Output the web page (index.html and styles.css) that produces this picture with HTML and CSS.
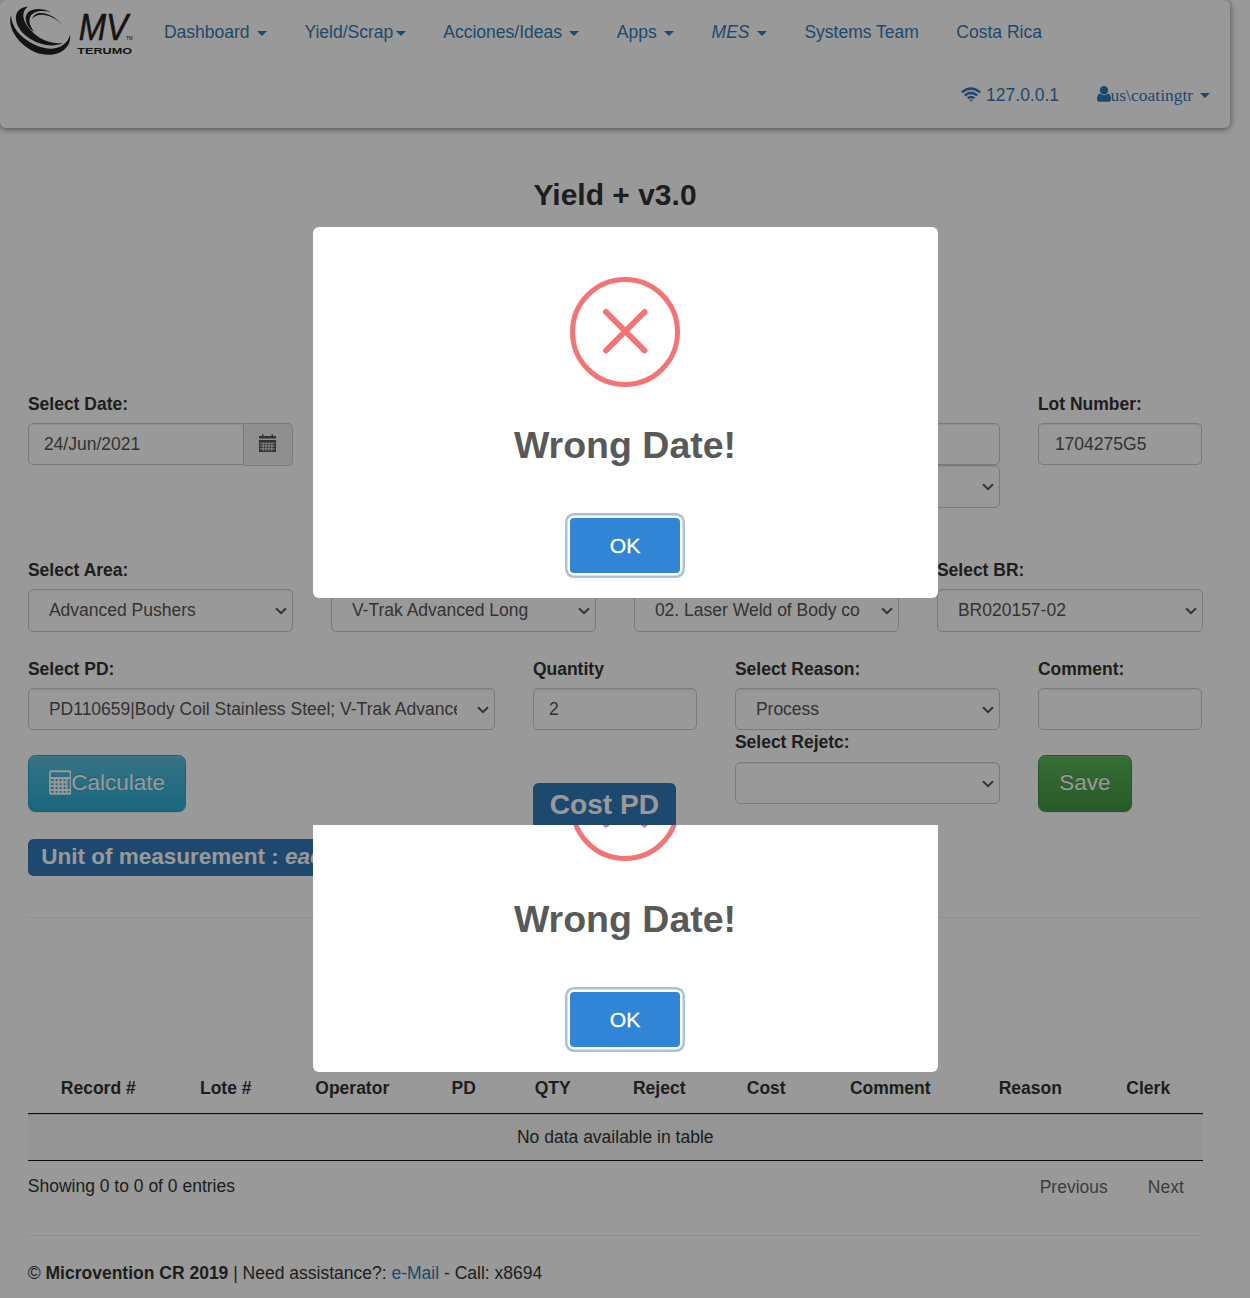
FILE: index.html
```html
<!DOCTYPE html>
<html lang="en">
<head>
<meta charset="utf-8">
<title>Yield + v3.0</title>
<link rel="stylesheet" href="styles.css">
</head>
<body>
<svg class="defs" aria-hidden="true">
  <symbol id="chev" viewBox="0 0 12 8"><path d="M1 1.2 6 6.2 11 1.2" fill="none" stroke="currentColor" stroke-width="2"/></symbol>
</svg>
<div class="page">
  <nav class="navbar">
    <svg class="logo" viewBox="0 0 420 192">
      <g fill="#222">
        <path d="M33 46C22 78 48 130 104 156C158 178 216 154 210 104C202 138 164 154 124 142C76 126 36 92 33 46Z"/>
        <path d="M84 20C36 22 38 72 76 106C108 134 156 144 188 130C156 131 126 122 100 98C68 68 60 36 84 20Z"/>
        <path d="M152 37C120 19 74 26 77 58C80 80 93 90 103 96C90 78 85 64 91 50C98 33 128 29 152 37Z"/>
        <path d="M97 56C104 28 154 34 188 76C158 43 114 34 97 56Z"/>
        <text x="236" y="121" font-size="112" font-style="italic" stroke="#222" stroke-width="1.5" textLength="148" lengthAdjust="spacingAndGlyphs">MV</text>
        <text x="378" y="121" font-size="15" textLength="20" lengthAdjust="spacingAndGlyphs">TM</text>
        <text x="232" y="161" font-size="28" font-weight="bold" textLength="164" lengthAdjust="spacingAndGlyphs">TERUMO</text>
      </g>
    </svg>
    <div class="menus">
      <ul class="menu">
        <li>Dashboard <b class="caret"></b></li>
        <li>Yield/Scrap<b class="caret"></b></li>
        <li>Acciones/Ideas <b class="caret"></b></li>
        <li>Apps <b class="caret"></b></li>
        <li><i>MES</i> <b class="caret"></b></li>
        <li>Systems Team</li>
        <li>Costa Rica</li>
      </ul>
      <ul class="menu right">
        <li><svg class="wifi" viewBox="0 0 20 15"><g fill="none" stroke="currentColor" stroke-width="2.5"><path d="M.8 5.4Q10-2.4 19.2 5.4"/><path d="M3.8 8.5Q10 3.2 16.2 8.5"/><path d="M6.7 11.3Q10 8.6 13.3 11.3"/></g><path d="M8.2 13Q10 11.8 11.8 13L10 14.8Z" fill="currentColor"/></svg> 127.0.0.1</li>
        <li class="user"><svg class="person" viewBox="0 0 14 16"><circle cx="7" cy="4.3" r="4.2" fill="currentColor"/><path d="M3 7.6Q7 11 11 7.6Q14 8.6 14 13Q14 15.8 11.8 15.8H2.2Q0 15.8 0 13Q0 8.6 3 7.6Z" fill="currentColor"/></svg>us\coatingtr <b class="caret"></b></li>
      </ul>
    </div>
  </nav>

  <h3>Yield + v3.0</h3>

  <section class="row first">
    <div class="c3"><label>Select Date:</label>
      <div class="group"><div class="control date">24/Jun/2021</div><div class="addon"><svg viewBox="0 0 17 18"><path fill="currentColor" d="M0 2H3V.3H4.5V2H12.5V.3H14V2H17V4.5H0ZM0 6H17V18H0Z"/><path stroke="#eee" stroke-width=".9" d="M1 9.2H16M1 12H16M1 14.8H16M4.2 9V17M7.1 9V17M10 9V17M12.9 9V17"/></svg></div></div></div>
    <div class="c3 at7"><label>&nbsp;</label><div class="control"></div><div class="control select"><span></span><svg><use href="#chev"/></svg></div></div>
    <div class="c2"><label>Lot Number:</label><div class="control lot">1704275G5</div></div>
  </section>

  <section class="row second">
    <div class="c3"><label>Select Area:</label><div class="control select"><span>Advanced Pushers</span><svg><use href="#chev"/></svg></div></div>
    <div class="c3"><label>&nbsp;</label><div class="control select"><span>V-Trak Advanced Long</span><svg><use href="#chev"/></svg></div></div>
    <div class="c3"><label>&nbsp;</label><div class="control select"><span>02. Laser Weld of Body co</span><svg><use href="#chev"/></svg></div></div>
    <div class="c3 wide"><label>Select BR:</label><div class="control select"><span>BR020157-02</span><svg><use href="#chev"/></svg></div></div>
  </section>

  <section class="row third">
    <div class="c5"><label>Select PD:</label><div class="control select"><span>PD110659|Body Coil Stainless Steel; V-Trak Advanced</span><svg><use href="#chev"/></svg></div>
      <div class="btn info"><svg viewBox="0 0 23 25"><rect x="1" y="1" width="21" height="23" rx="1" fill="none" stroke="currentColor" stroke-width="1.8"/><path fill="none" stroke="currentColor" stroke-width="2" d="M1.5 8H21.5M1.5 12.2H18M1.5 16.2H18M1.5 20.2H21.5M5.7 8V24M9.8 8V24M13.9 8V24M18 8V24"/></svg>Calculate</div></div>
    <div class="c2"><label>Quantity</label><div class="control">2</div><div class="badge cost">Cost PD</div></div>
    <div class="c3"><label>Select Reason:</label><div class="control select"><span>Process</span><svg><use href="#chev"/></svg></div>
      <label>Select Rejetc:</label><div class="control select"><span></span><svg><use href="#chev"/></svg></div></div>
    <div class="c2"><label>Comment:</label><div class="control"></div><div class="btn success">Save</div></div>
  </section>

  <div class="content">
    <div class="badge unit">Unit of measurement : <i>each</i></div>
    <hr>
    <table>
      <colgroup><col class="w1"><col class="w2"><col class="w3"><col class="w4"><col class="w5"><col class="w6"><col class="w7"><col class="w8"><col class="w9"><col></colgroup>
      <thead><tr><th>Record #</th><th>Lote #</th><th>Operator</th><th>PD</th><th>QTY</th><th>Reject</th><th>Cost</th><th>Comment</th><th>Reason</th><th>Clerk</th></tr></thead>
      <tbody><tr><td colspan="10">No data available in table</td></tr></tbody>
    </table>
    <div class="tablefoot"><span>Showing 0 to 0 of 0 entries</span><span class="pager"><span>Previous</span><span>Next</span></span></div>
    <hr class="end">
    <footer>© <b>Microvention CR 2019</b> | Need assistance?: <a>e-Mail</a> - Call: x8694</footer>
  </div>
</div>

<div class="backdrop"></div>
<div class="modal upper">
  <svg class="error" viewBox="0 0 110 110"><circle cx="55" cy="55" r="52.5"/><path d="M36 35 74.5 73.5M74.5 35 36 73.5"/></svg>
  <h2>Wrong Date!</h2>
  <div class="ok">OK</div>
</div>
<div class="modal-window"><div class="modal">
  <svg class="error" viewBox="0 0 110 110"><circle cx="55" cy="55" r="52.5"/><path d="M36 35 74.5 73.5M74.5 35 36 73.5"/></svg>
  <h2>Wrong Date!</h2>
  <div class="ok">OK</div>
</div></div>
</body>
</html>
```
FILE: styles.css
```css
* { box-sizing: border-box; }
html, body { margin: 0; height: 1298px; overflow: hidden; }
body { font: 17.5px/25px "Liberation Sans", Arial, sans-serif; color: #333; background: #fff; position: relative; }
.defs { position: absolute; width: 0; height: 0; }
.page { width: 1250px; height: 1298px; }

/* Navigation */
.navbar { width: 1230px; height: 128px; border-radius: 6px; display: flex; box-shadow: 0 1px 6px rgba(0,0,0,.55); color: #337ab7; }
.logo { width: 140px; height: 64px; flex: none; }
.menus { flex: 1; padding-top: 1px; }
.menu { list-style: none; display: flex; margin: 0; padding: 0 0 0 5.2px; }
.menu li { padding: 18.75px; height: 62.5px; white-space: nowrap; }
.menu.right { justify-content: flex-end; padding: .6px 1.2px 0 0; }
.caret { display: inline-block; margin-left: 2.5px; border: 5px solid transparent; border-top-color: currentColor; border-bottom: 0; vertical-align: middle; }
.right .caret { vertical-align: 3px; }
.wifi { width: 20px; height: 15px; vertical-align: -1px; }
.user { font-family: "Liberation Serif", serif; }
.person { width: 14px; height: 16px; vertical-align: -1px; }

h3 { margin: 48px 0 0; width: 1230px; height: 215.6px; text-align: center; font-size: 30px; line-height: 38px; }

/* Form grid */
.row { display: grid; grid-template-columns: repeat(12, 101px); margin-left: 9px; align-items: start; }
.row > div { padding: 0 19px 0 18.9px; min-width: 0; }
.row > .wide { padding-right: 18px; }
.first { height: 166px; }
.second { height: 99px; }
.third { height: 182.4px; }
.c2 { grid-column-end: span 2; }
.c3 { grid-column-end: span 3; }
.c5 { grid-column-end: span 5; }
.row > .at7 { grid-column: 8 / span 3; }
label { display: block; font-weight: bold; margin-bottom: 6.25px; }
.control { height: 42.5px; padding: 8px 15px 0; border: 1px solid #ccc; border-radius: 5px; color: #555; box-shadow: inset 0 1px 1px rgba(0,0,0,.075); background: #fff; }
.lot { padding-left: 16px; }
.select { display: flex; padding: 8px 5px 0 20px; }
.second .select { height: 43px; }
.select span { flex: 1; min-width: 0; overflow: hidden; white-space: nowrap; }
.select svg { width: 12px; height: 8px; margin: 9px 0 0 20px; flex: none; }
.group { display: flex; }
.date { width: 216px; border-radius: 5px 0 0 5px; }
.addon { flex: 1; height: 43px; display: flex; justify-content: center; padding: 10.5px 1px 0 0; border: 1px solid #ccc; border-left: 0; border-radius: 0 5px 5px 0; background: #eee; color: #555; }
.addon svg { width: 17px; height: 18px; }
.btn { width: fit-content; height: 57.5px; margin-top: 24.5px; padding: 12.5px 19.9px; border: 1px solid; border-radius: 7.5px; color: #fff; font-size: 22.5px; line-height: 30px; text-shadow: 0 -1px 0 rgba(0,0,0,.2); box-shadow: inset 0 1px 0 rgba(255,255,255,.15), 0 1px 1px rgba(0,0,0,.075); }
.btn svg { width: 22.5px; height: 25px; vertical-align: -5px; }
.info { background: linear-gradient(#5bc0de, #2aabd2); border-color: #28a4c9; }
.success { padding: 12.5px 20.4px; background: linear-gradient(#5cb85c, #419641); border-color: #3e8f3e; }
.badge { width: fit-content; white-space: nowrap; background: #337ab7; color: #fff; font-weight: bold; border-radius: 5.6px; }
.cost { height: 46px; margin-top: 52.5px; padding: 0 16.9px; font-size: 28.1px; line-height: 43px; }

/* Records */
.content { width: 1175px; margin-left: 27.75px; }
.unit { height: 37px; padding: 0 13.5px; font-size: 22.5px; line-height: 35px; }
hr { border: 0; border-top: 1px solid #eee; margin: 41px 0 144px; }
table { width: 1175px; table-layout: fixed; border-collapse: separate; border-spacing: 0; border-bottom: 1px solid #111; }
th { height: 52px; padding: 3px 0 0 1px; border-bottom: 1px solid #111; }
td { height: 46px; padding: 0; text-align: center; background: #f9f9f9; border-top: 1px solid #ddd; }
.w1 { width: 140px; } .w2 { width: 115px; } .w3 { width: 138px; } .w4 { width: 85px; } .w5 { width: 93px; }
.w6 { width: 120px; } .w7 { width: 94px; } .w8 { width: 154px; } .w9 { width: 126px; }
.tablefoot { display: flex; justify-content: space-between; height: 74px; padding: 13px 19px 0 0; }
.pager { display: flex; gap: 40px; color: #666; padding-top: 1px; }
.end { margin: 0 0 25px; }
a { color: #337ab7; }

/* Alerts */
.backdrop { position: absolute; inset: 0; background: rgba(0,0,0,.4); }
.modal { width: 625px; height: 371px; padding: 50px 1px 0 0; background: #fff; border-radius: 6px; display: flex; flex-direction: column; align-items: center; }
.upper { position: absolute; left: 313px; top: 227px; }
.modal-window { position: absolute; left: 313px; top: 825px; height: 247px; overflow: hidden; display: flex; align-items: flex-end; }
.modal-window .modal { flex: none; }
.error { width: 110px; height: 110px; flex: none; fill: none; stroke: #f27474; stroke-width: 5; }
.error path { stroke-width: 5.9; stroke-linecap: round; }
h2 { margin: 35px 0 0; height: 96px; font-size: 37.5px; line-height: 46px; color: #595959; }
.ok { width: 110px; height: 55px; border-radius: 4px; background: #3085d6; color: #fff; text-align: center; font-size: 21.1px; line-height: 55px; -webkit-text-stroke: .3px #fff; box-shadow: 0 0 0 2.5px #fff, 0 0 0 5px rgba(50,100,150,.4); }
```
